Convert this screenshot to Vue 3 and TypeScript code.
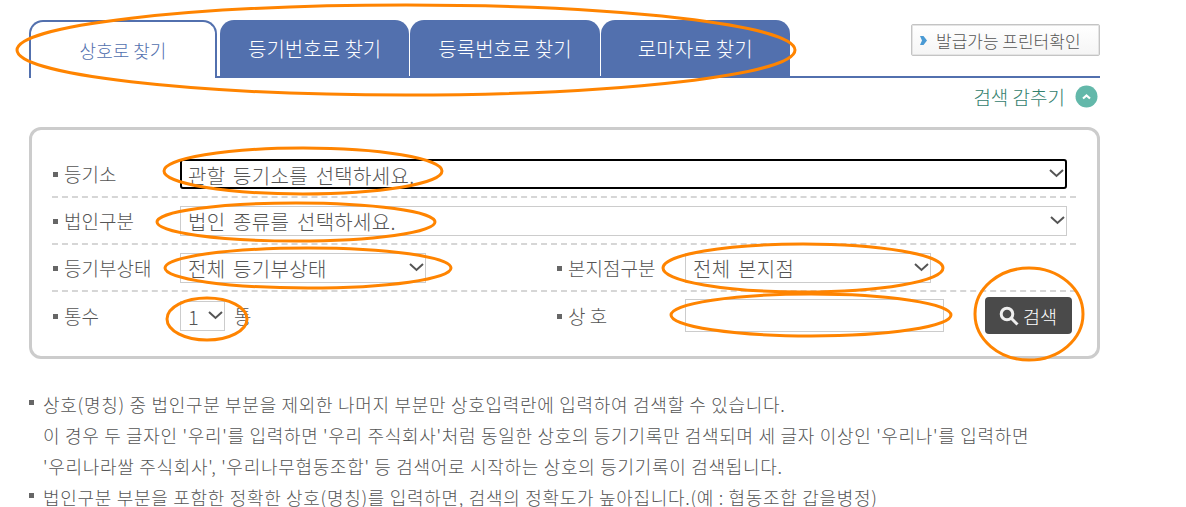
<template>
  <div class="page">
    <div class="top">
      <ul class="tabs">
        <li
          v-for="(tab, i) in tabs"
          :key="tab"
          class="tab"
          :class="{ active: i === 0 }"
        >
          {{ tab }}
        </li>
      </ul>
      <button class="printer">
        <svg width="7" height="9" viewBox="0 0 7 9"><path d="M0 0h3.500l3.500 4.500-3.500 4.500H0l2-4.500z" fill="#4a9ad4" /></svg>
        발급가능 프린터확인
      </button>
    </div>

    <div class="toggle">
      <span>검색 감추기</span>
      <svg width="23" height="23" viewBox="0 0 23 23">
        <circle cx="11.500" cy="11.500" r="11" fill="#63b8aa" />
        <path d="M8 13.500l3.500-3 3.500 3" fill="none" stroke="#fff" stroke-width="2.200" />
      </svg>
    </div>

    <form class="panel" @submit.prevent>
      <div class="row">
        <label class="label">등기소</label>
        <select class="field wide focused">
          <option>관할 등기소를 선택하세요.</option>
        </select>
      </div>
      <div class="row">
        <label class="label">법인구분</label>
        <select class="field wide">
          <option>법인 종류를 선택하세요.</option>
        </select>
      </div>
      <div class="row">
        <div class="cell left">
          <label class="label">등기부상태</label>
          <select class="field half">
            <option>전체 등기부상태</option>
          </select>
        </div>
        <div class="cell right">
          <label class="label">본지점구분</label>
          <select class="field half">
            <option>전체 본지점</option>
          </select>
        </div>
      </div>
      <div class="row last">
        <div class="cell left">
          <label class="label">통수</label>
          <select class="field count">
            <option>1</option>
          </select>
          <span class="unit">통</span>
        </div>
        <div class="cell right">
          <label class="label">상 호</label>
          <input class="field name" type="text" />
          <button class="search">
            <svg width="20" height="20" viewBox="0 0 20 20">
              <circle cx="8" cy="8" r="5.800" fill="none" stroke="#eee" stroke-width="3" />
              <path d="M12.500 12.500l6 6" stroke="#eee" stroke-width="3" />
            </svg>
            검색
          </button>
        </div>
      </div>
    </form>

    <ul class="notes">
      <li>
        상호(명칭) 중 법인구분 부분을 제외한 나머지 부분만 상호입력란에 입력하여 검색할 수 있습니다.<br />
        이 경우 두 글자인 '우리'를 입력하면 '우리 주식회사'처럼 동일한 상호의 등기기록만 검색되며 세 글자 이상인 '우리나'를 입력하면<br />
        '우리나라쌀 주식회사', '우리나무협동조합' 등 검색어로 시작하는 상호의 등기기록이 검색됩니다.
      </li>
      <li class="tail">법인구분 부분을 포함한 정확한 상호(명칭)를 입력하면, 검색의 정확도가 높아집니다.(예 : 협동조합 갑을병정)</li>
    </ul>

    <!-- 주석 표시 (주황색 타원) -->
    <svg class="marks" width="1186" height="507">
      <ellipse
        v-for="(m, i) in marks"
        :key="i"
        :cx="m[0]"
        :cy="m[1]"
        :rx="m[2]"
        :ry="m[3]"
      />
    </svg>
  </div>
</template>

<script setup lang="ts">
const tabs: string[] = ['상호로 찾기', '등기번호로 찾기', '등록번호로 찾기', '로마자로 찾기']

// cx, cy, rx, ry
const marks: number[][] = [
  [406, 50, 389, 45],
  [303, 171, 139, 23],
  [296, 222, 139, 19],
  [308, 268, 143, 20],
  [207, 319, 40, 21],
  [803, 268, 140, 24],
  [811, 315, 140, 21],
  [1029, 314, 54, 46],
]
</script>

<style>
html,
body {
  margin: 0;
  background: #fff;
  overflow: hidden;
}
</style>

<style scoped>
.page {
  position: relative;
  width: 1186px;
  height: 507px;
  padding: 20px 0 0 29px;
  box-sizing: border-box;
  overflow: hidden;
  font-family: "Noto Sans CJK KR", "Noto Sans", sans-serif;
  font-weight: 300;
  color: #555;
}

.top {
  display: flex;
  justify-content: space-between;
  width: 1071px;
  height: 58px;
  border-bottom: 2px solid #5270ae;
  box-sizing: border-box;
  position: relative;
}

.tabs {
  display: flex;
  gap: 1px;
  list-style: none;
  margin: 0;
  padding: 0;
  height: 58px;
}

.tab {
  width: 189.300px;
  height: 58px;
  box-sizing: border-box;
  padding-top: 11px;
  text-align: center;
  font-size: 20px;
  line-height: 36px;
  white-space: nowrap;
  color: #fff;
  background: #5270ae;
  border-radius: 14px 14px 0 0;
}

.tab.active {
  width: 188px;
  margin-right: 2px;
  padding-top: 10px;
  font-size: 18px;
  color: #5270ae;
  background: #fff;
  border: 2px solid #5270ae;
  border-bottom: none;
}

.printer {
  display: flex;
  align-items: center;
  gap: 9px;
  width: 189px;
  height: 32px;
  margin-top: 4px;
  padding: 0 0 0 8px;
  box-sizing: border-box;
  font: inherit;
  font-size: 17px;
  color: #555;
  white-space: nowrap;
  background: linear-gradient(#fff, #f5f5f5);
  border: 1px solid #c4c4c4;
  border-radius: 2px;
  box-shadow: 0 0 0 1px #e4e4e4 inset;
}

.toggle {
  display: flex;
  justify-content: flex-end;
  align-items: center;
  gap: 10px;
  width: 1069px;
  height: 34px;
  margin-top: 1px;
  font-size: 19px;
  color: #33806d;
}

.panel {
  width: 1071px;
  height: 232px;
  margin-top: 14px;
  padding: 21px 21px 0 20px;
  box-sizing: border-box;
  border: 3px solid #ccc;
  border-radius: 12px;
}

.row {
  display: flex;
  align-items: center;
  height: 47px;
  border-bottom: 2px dashed #d6d6d6;
  box-sizing: border-box;
}

.row.last {
  border-bottom: none;
}

.cell {
  display: flex;
  align-items: center;
}

.cell.left {
  width: 504px;
}

.label {
  display: block;
  position: relative;
  width: 128px;
  padding-left: 12px;
  box-sizing: border-box;
  font-size: 19px;
  white-space: nowrap;
}

.cell.right .label {
  width: 129px;
}

.label::before {
  content: "";
  position: absolute;
  left: 1px;
  top: 50%;
  width: 5px;
  height: 5px;
  margin-top: -2px;
  background: #666;
}

.field {
  appearance: none;
  height: 30px;
  padding: 0 28px 0 7px;
  box-sizing: border-box;
  background: #fff url("data:image/svg+xml,%3Csvg xmlns='http://www.w3.org/2000/svg' width='15' height='9'%3E%3Cpath d='M1 1l6.500 6 6.500-6' fill='none' stroke='%23555' stroke-width='2'/%3E%3C/svg%3E") no-repeat right 1px center;
  border: 1px solid #ccc;
  border-radius: 0;
  font-family: inherit;
  font-weight: 300;
  font-size: 20px;
  word-spacing: 3px;
  letter-spacing: 0.3px;
  color: #555;
  outline: none;
}

.wide {
  width: 887px;
}

.focused {
  border: 2px solid #000;
  border-radius: 3px;
  padding-left: 6px;
}

.half {
  width: 246px;
}

.count {
  width: 45px;
  padding-right: 0;
}

.unit {
  margin-left: 9px;
  font-size: 19px;
}

.name {
  width: 259px;
  height: 33px;
  background-image: none;
}

.search {
  display: flex;
  align-items: center;
  gap: 4px;
  width: 87px;
  height: 37px;
  margin-left: 41px;
  padding: 0 0 0 14px;
  font: inherit;
  font-size: 18.500px;
  color: #fff;
  background: #4a4a4a;
  border: none;
  border-radius: 4px;
}

.notes {
  list-style: none;
  margin: 30px 0 0;
  padding: 0 0 0 14px;
  font-size: 18px;
  letter-spacing: 0.7px;
  line-height: 31px;
  color: #555;
  white-space: nowrap;
}

.notes li {
  position: relative;
}

.notes li::before {
  content: "";
  position: absolute;
  left: -14px;
  top: 11px;
  width: 5px;
  height: 5px;
  background: #666;
}

/* 마지막 줄은 화면 아래에 걸리므로 줄 높이를 줄임 */
.notes li.tail {
  margin-top: 6px;
  line-height: 18px;
}

.notes li.tail::before {
  top: 5px;
}

.marks {
  position: absolute;
  left: 0;
  top: 0;
  pointer-events: none;
}

.marks ellipse {
  fill: none;
  stroke: #ff8400;
  stroke-width: 3;
}
</style>
